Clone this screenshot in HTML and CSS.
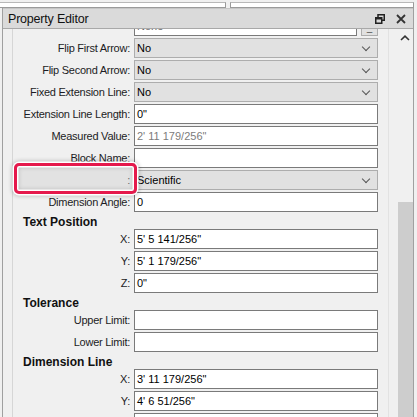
FILE: index.html
```html
<!DOCTYPE html>
<html>
<head>
<meta charset="utf-8">
<link rel="stylesheet" href="styles.css">
</head>
<body>
<div class="top">
  <div class="topbox a"></div>
  <div class="topbox b"></div>
</div>
<div class="window">
  <div class="titlebar">
    <span class="title">Property Editor</span>
    <span class="ticons">
      <svg width="10" height="10" viewBox="0 0 10 10" class="restore">
        <rect x="3" y="0.75" width="6.25" height="5.5" fill="none" stroke="#222" stroke-width="1.5"/>
        <rect x="0.75" y="3.75" width="6" height="5.5" fill="#dadada" stroke="#222" stroke-width="1.5"/>
        <line x1="0.75" y1="4.5" x2="6.75" y2="4.5" stroke="#222" stroke-width="2"/>
      </svg>
      <svg width="10" height="10" viewBox="0 0 10 10" class="close">
        <path d="M1 1 L9 9 M9 1 L1 9" stroke="#333" stroke-width="1.8"/>
      </svg>
    </span>
  </div>
  <div class="body">
    <div class="gutter"></div>
    <div class="content">
      <div class="rows">
        <div class="row">
          <div class="label"></div>
          <div class="field short">None</div>
          <div class="ellip">&#8211;</div>
        </div>
        <div class="row"><div class="label">Flip First Arrow:</div><div class="field select"><span>No</span><span class="chev"></span></div></div>
        <div class="row"><div class="label">Flip Second Arrow:</div><div class="field select"><span>No</span><span class="chev"></span></div></div>
        <div class="row"><div class="label">Fixed Extension Line:</div><div class="field select"><span>No</span><span class="chev"></span></div></div>
        <div class="row"><div class="label">Extension Line Length:</div><div class="field">0"</div></div>
        <div class="row"><div class="label">Measured Value:</div><div class="field ro">2' 11 179/256"</div></div>
        <div class="row"><div class="label">Block Name:</div><div class="field"></div></div>
        <div class="row"><div class="label">:</div><div class="field select"><span>Scientific</span><span class="chev"></span></div></div>
        <div class="row"><div class="label">Dimension Angle:</div><div class="field">0</div></div>
        <div class="heading">Text Position</div>
        <div class="row"><div class="label">X:</div><div class="field">5' 5 141/256"</div></div>
        <div class="row"><div class="label">Y:</div><div class="field">5' 1 179/256"</div></div>
        <div class="row"><div class="label">Z:</div><div class="field">0"</div></div>
        <div class="heading">Tolerance</div>
        <div class="row"><div class="label">Upper Limit:</div><div class="field"></div></div>
        <div class="row"><div class="label">Lower Limit:</div><div class="field"></div></div>
        <div class="heading">Dimension Line</div>
        <div class="row"><div class="label">X:</div><div class="field">3' 11 179/256"</div></div>
        <div class="row"><div class="label">Y:</div><div class="field">4' 6 51/256"</div></div>
        <div class="row"><div class="label"></div><div class="field"></div></div>
      </div>
    </div>
    <div class="sep"></div>
    <div class="scroll">
      <div class="arrow">
        <svg width="10" height="6" viewBox="0 0 10 6"><path d="M1 5 L5 1.2 L9 5" fill="none" stroke="#333" stroke-width="1.6"/></svg>
      </div>
      <div class="track"></div>
      <div class="thumb"></div>
    </div>
  </div>
  <div class="highlight"></div>
</div>
</body>
</html>
```
FILE: styles.css
```css
html, body {
  margin: 0;
  padding: 0;
  width: 417px;
  height: 417px;
  overflow: hidden;
  background: #f0f0f0;
  font-family: "Liberation Sans", Arial, sans-serif;
  font-size: 11px;
  color: #1c1c24;
}

.top {
  height: 8px;
  display: flex;
  box-sizing: border-box;
  padding-top: 2px;
}
.topbox {
  height: 6px;
  box-sizing: border-box;
  background: #fff;
  border: 1px solid #9a9a9a;
  border-top-color: #b8b8b8;
}
.topbox.a { width: 226px; border-left: none; }
.topbox.b { width: 184px; margin-left: 4px; }

.window {
  position: relative;
  margin-left: 2px;
  width: 412px;
  height: 409px;
  box-sizing: border-box;
  border-left: 1px solid #a0a0a0;
  border-right: 1px solid #a0a0a0;
  display: flex;
  flex-direction: column;
}

.titlebar {
  height: 21px;
  box-sizing: border-box;
  background: #dadada;
  border-top: 1px solid #c6c6c6;
  border-bottom: 1px solid #a8a8a8;
  display: flex;
  align-items: center;
  justify-content: space-between;
  padding-left: 5px;
}
.title {
  font-size: 12.5px;
  letter-spacing: -0.2px;
  color: #111;
  padding-top: 1px;
}
.ticons {
  display: flex;
  align-items: center;
  gap: 11px;
  padding-right: 7px;
}

.body {
  flex: 1;
  display: flex;
  min-height: 0;
}
.gutter {
  width: 9px;
  border-right: 1px solid #d6d6d6;
}
.content {
  width: 375px;
  overflow: hidden;
}
.rows {
  margin-top: -13px;
}
.row {
  display: flex;
  align-items: center;
  height: 20px;
  margin-bottom: 2px;
}
.label {
  width: 117px;
  padding-right: 4px;
  text-align: right;
  letter-spacing: -0.25px;
  white-space: nowrap;
}
.field {
  width: 244px;
  height: 20px;
  box-sizing: border-box;
  border: 1px solid #7a7a7a;
  background: #fff;
  padding-left: 2px;
  display: flex;
  align-items: center;
  white-space: nowrap;
  color: #000;
}
.field.short {
  width: 223px;
  color: #666;
}
.ellip {
  width: 17px;
  height: 19px;
  margin-left: 4px;
  box-sizing: border-box;
  background: #e1e1e1;
  border: 1px solid #adadad;
  color: #555;
  font-size: 10px;
  text-align: center;
  line-height: 28px;
}
.field.ro { color: #7c7c7c; }
.field.select {
  background: #e1e1e1;
  border-color: #adadad;
  justify-content: space-between;
}
.chev {
  width: 6px;
  height: 6px;
  box-sizing: border-box;
  border-right: 1.3px solid #555;
  border-bottom: 1.3px solid #555;
  transform: rotate(45deg);
  margin-right: 8px;
  margin-bottom: 3px;
}
.heading {
  height: 13px;
  margin-bottom: 2px;
  padding-left: 10px;
  font-weight: bold;
  font-size: 12px;
  line-height: 16px;
  color: #111;
}

.sep {
  width: 1px;
  background: #e2e2e2;
  margin-right: 8px;
}
.scroll {
  width: 16px;
  display: flex;
  flex-direction: column;
}
.arrow {
  height: 17px;
  display: flex;
  align-items: center;
  justify-content: center;
}
.track { height: 156px; }
.thumb {
  flex: 1;
  margin-left: 1px;
  background: #cdcdcd;
}

.highlight {
  position: absolute;
  left: 11px;
  top: 155px;
  width: 123px;
  height: 31px;
  box-sizing: border-box;
  border: 3px solid #e5194c;
  border-radius: 5px;
  box-shadow: 0 0 0 1.5px #fff, 0 0 4px 2px rgba(0,0,0,0.22), inset 0 0 0 1.5px #fff, inset 0 0 5px 1px rgba(0,0,0,0.2);
  background: rgba(205,205,205,0.4);
}
```
